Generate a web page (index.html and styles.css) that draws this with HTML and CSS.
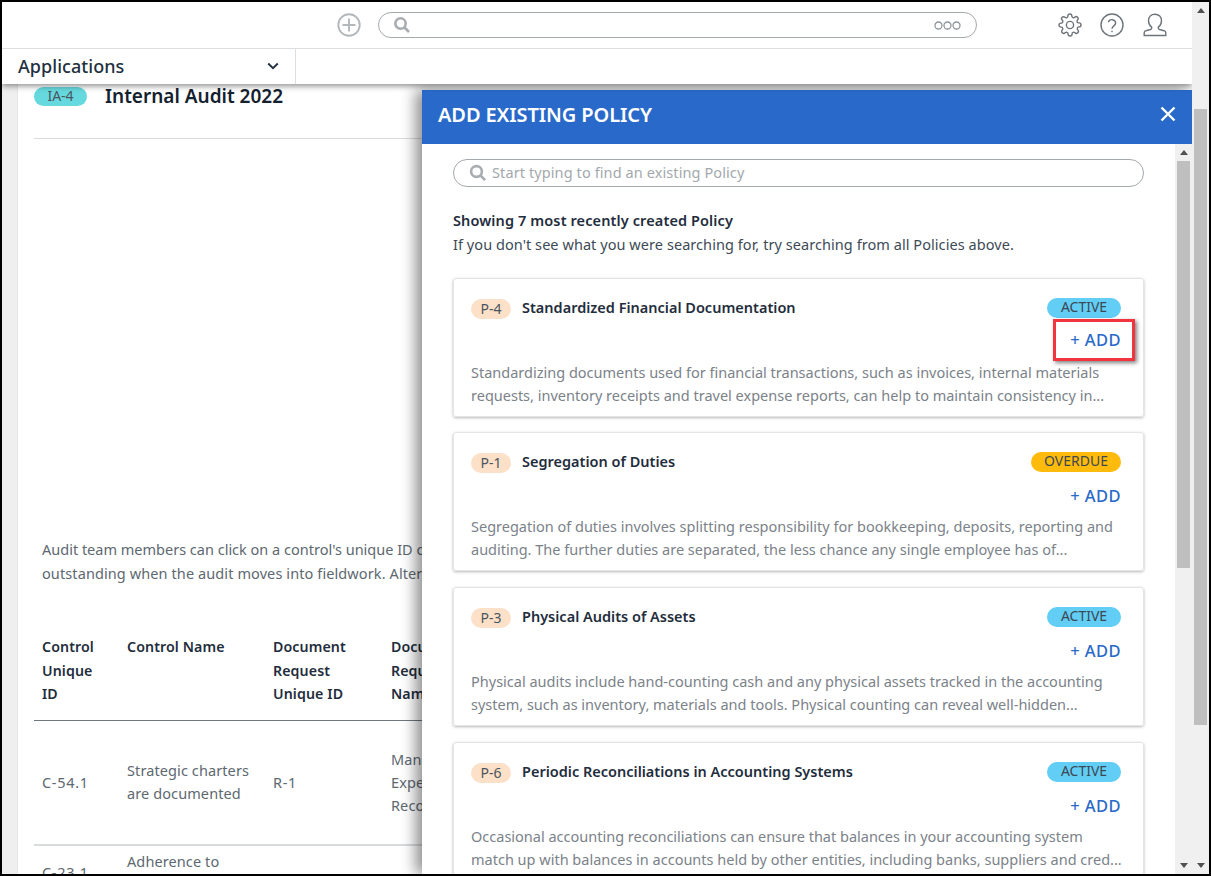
FILE: index.html
```html
<!DOCTYPE html>
<html lang="en">
<head>
<meta charset="utf-8">
<title>Add Existing Policy</title>
<link rel="stylesheet" href="styles.css">
</head>
<body>
<div class="frame">
  <div class="app">
    <header class="topbar">
      <div class="toprow">
        <svg class="ico-plus" viewBox="0 0 24 24"><circle cx="12" cy="12" r="10.7"/><path d="M12 5.5v13M5.5 12h13"/></svg>
        <div class="globalsearch">
          <svg class="ico-search" viewBox="0 0 18 18"><circle cx="7.5" cy="7.5" r="5.2"/><path d="M11.5 11.5l4.5 4.5"/></svg>
          <svg class="ico-dots" viewBox="0 0 27 9"><circle cx="4.5" cy="4.5" r="3.5"/><circle cx="13.5" cy="4.5" r="3.5"/><circle cx="22.5" cy="4.5" r="3.5"/></svg>
        </div>
        <div class="topicons">
          <svg class="ico-top" viewBox="0 0 24 24"><circle cx="12" cy="12" r="3.6"/><path d="M19.4 15a1.65 1.65 0 0 0 .33 1.82l.06.06a2 2 0 0 1-2.83 2.83l-.06-.06a1.65 1.65 0 0 0-2.82 1.17V21a2 2 0 0 1-4 0v-.09A1.65 1.65 0 0 0 7.18 19.8l-.06.06a2 2 0 0 1-2.83-2.83l.06-.06a1.65 1.65 0 0 0-1.17-2.82H3a2 2 0 0 1 0-4h.09A1.65 1.65 0 0 0 4.2 7.18l-.06-.06a2 2 0 0 1 2.83-2.83l.06.06a1.65 1.65 0 0 0 2.82-1.17V3a2 2 0 0 1 4 0v.09a1.65 1.65 0 0 0 2.82 1.17l.06-.06a2 2 0 0 1 2.83 2.83l-.06.06a1.65 1.65 0 0 0 1.17 2.82H21a2 2 0 0 1 0 4h-.09a1.65 1.65 0 0 0-1.51 1z"/></svg>
          <svg class="ico-top" viewBox="0 0 24 24"><circle cx="12" cy="12" r="11"/><path d="M8.3 9.3a3.8 3.8 0 0 1 7.4.8c0 2.6-3.7 3-3.7 5.6"/><path d="M12 17.8v1.4"/></svg>
          <svg class="ico-top" viewBox="0 0 24 24"><path d="M12 1.2c-3.9 0-6.5 2.8-6.5 6.5 0 3 1.5 5.2 3.3 6.6 0 1.2-.3 1.9-1.3 2.2l-4.6 1.2c-1 .3-1.7 1.1-1.7 2.1v2.7h21.6v-2.7c0-1-.7-1.8-1.7-2.1l-4.6-1.2c-1-.3-1.3-1-1.3-2.2 1.8-1.4 3.3-3.6 3.3-6.6 0-3.7-2.6-6.5-6.5-6.5z"/></svg>
        </div>
      </div>
      <div class="subrow">
        <div class="appmenu">
          <span class="appmenu-label">Applications</span>
          <svg class="ico-chev" viewBox="0 0 12 8"><path d="M1.2 1.5L6 6.2l4.8-4.7"/></svg>
        </div>
      </div>
    </header>

    <main class="stage">
      <div class="gutter"></div>
      <section class="sheet">
        <div class="sheet-head">
          <span class="pill pill-teal">IA-4</span>
          <h1 class="sheet-title">Internal Audit 2022</h1>
        </div>
        <p class="intro">Audit team members can click on a control's unique ID or<br><span class="intro-wide">outstanding when the audit moves into fieldwork. Alternatively</span></p>
        <table class="grid">
          <thead>
            <tr><th class="c1">Control<br>Unique<br>ID</th><th class="c2">Control Name</th><th class="c3">Document<br>Request<br>Unique ID</th><th class="c4">Document<br>Request<br>Name</th></tr>
          </thead>
          <tbody>
            <tr class="row-a"><td class="code">C-54.1</td><td>Strategic charters<br>are documented</td><td class="code">R-1</td><td>Management<br>Expense<br>Records</td></tr>
            <tr class="row-b"><td class="code low">C-23.1</td><td>Adherence to</td><td></td><td></td></tr>
          </tbody>
        </table>
      </section>

      <aside class="drawer">
        <div class="drawer-head">
          <h2 class="drawer-title">ADD EXISTING POLICY</h2>
          <svg class="ico-close" viewBox="0 0 16 16"><path d="M1.5 1.5l13 13M14.5 1.5l-13 13"/></svg>
        </div>
        <div class="drawer-main">
          <div class="drawer-body">
            <div class="policysearch">
              <svg class="ico-search2" viewBox="0 0 18 18"><circle cx="7.5" cy="7.5" r="5.4"/><path d="M11.5 11.5l4.6 4.6"/></svg>
              <span class="placeholder">Start typing to find an existing Policy</span>
            </div>
            <p class="hint"><strong>Showing 7 most recently created Policy</strong><br>If you don't see what you were searching for, try searching from all Policies above.</p>

            <article class="card">
              <div class="card-top"><span class="pill pill-peach">P-4</span><span class="card-title">Standardized Financial Documentation</span><span class="status status-active">ACTIVE</span></div>
              <div class="card-add"><a class="add add-marked">+ ADD</a></div>
              <p class="card-desc">Standardizing documents used for financial transactions, such as invoices, internal materials<br>requests, inventory receipts and travel expense reports, can help to maintain consistency in...</p>
            </article>
            <article class="card">
              <div class="card-top"><span class="pill pill-peach">P-1</span><span class="card-title">Segregation of Duties</span><span class="status status-overdue">OVERDUE</span></div>
              <div class="card-add"><a class="add">+ ADD</a></div>
              <p class="card-desc">Segregation of duties involves splitting responsibility for bookkeeping, deposits, reporting and<br>auditing. The further duties are separated, the less chance any single employee has of...</p>
            </article>
            <article class="card">
              <div class="card-top"><span class="pill pill-peach">P-3</span><span class="card-title">Physical Audits of Assets</span><span class="status status-active">ACTIVE</span></div>
              <div class="card-add"><a class="add">+ ADD</a></div>
              <p class="card-desc">Physical audits include hand-counting cash and any physical assets tracked in the accounting<br>system, such as inventory, materials and tools. Physical counting can reveal well-hidden...</p>
            </article>
            <article class="card">
              <div class="card-top"><span class="pill pill-peach">P-6</span><span class="card-title">Periodic Reconciliations in Accounting Systems</span><span class="status status-active">ACTIVE</span></div>
              <div class="card-add"><a class="add">+ ADD</a></div>
              <p class="card-desc">Occasional accounting reconciliations can ensure that balances in your accounting system<br>match up with balances in accounts held by other entities, including banks, suppliers and cred...</p>
            </article>
          </div>
          <div class="scrollbar scrollbar-inner">
            <span class="arrow arrow-up"></span>
            <span class="thumb thumb-inner"></span>
            <span class="arrow arrow-down"></span>
          </div>
        </div>
      </aside>
    </main>
  </div>
  <div class="scrollbar scrollbar-outer">
    <span class="arrow arrow-up"></span>
    <span class="thumb thumb-outer"></span>
    <span class="arrow arrow-down"></span>
  </div>
</div>
</body>
</html>
```
FILE: styles.css
```css
* { box-sizing: border-box; }
html, body { margin: 0; height: 100%; overflow: hidden; }
body { font-family: "Noto Sans", "Open Sans", sans-serif; color: #1f2d3d; background: #000; }

.frame { display: flex; height: 876px; width: 1211px; border: 2px solid #000; background: #fff; overflow: hidden; }
.app { width: 1190px; height: 872px; display: flex; flex-direction: column; position: relative; overflow: hidden; }

/* top bar */
.topbar { flex: none; height: 82px; background: #fff; box-shadow: 0 2px 6px rgba(0,0,0,.45); position: relative; z-index: 3; }
.toprow { height: 47px; display: flex; align-items: center; padding-left: 335px; border-bottom: 1px solid #dcdfe1; }
.ico-plus { width: 24px; height: 24px; fill: none; stroke: #b3b8bc; stroke-width: 1.9; margin-top: -1px; }
.globalsearch { width: 599px; height: 26px; margin-left: 17px; margin-top: -1px; border: 1px solid #a4a9ad; border-radius: 13px; display: flex; align-items: center; justify-content: space-between; padding: 0 15px 0 14px; }
.ico-search { width: 18px; height: 18px; fill: none; stroke: #a8adb1; stroke-width: 2.6; }
.ico-dots { width: 27px; height: 9px; fill: none; stroke: #8f959a; stroke-width: 1.3; margin-top: 2px; }
.topicons { display: flex; gap: 18px; margin-left: 81px; }
.ico-top { width: 24px; height: 24px; fill: none; stroke: #6d747a; stroke-width: 1.4; }
.ico-top:last-child { margin-left: 1px; }
.subrow { height: 35px; display: flex; }
.appmenu { width: 294px; display: flex; align-items: center; justify-content: space-between; padding: 0 16px; border-right: 1px solid #dcdfe1; }
.appmenu-label { font-size: 18px; font-weight: 500; color: #22303f; padding-bottom: 2px; letter-spacing: .05px; }
.ico-chev { width: 12px; height: 8px; fill: none; stroke: #22303f; stroke-width: 1.9; margin-top: -2px; }

/* background page */
.stage { flex: 1; display: flex; position: relative; min-height: 0; background: #fff; }
.gutter { flex: none; width: 15px; background: #efefef; }
.sheet { flex: none; width: 405px; background: #fff; border-left: 1px solid #e6e6e6; padding: 3px 0 0 16px; overflow: hidden; }
.sheet-head { display: flex; align-items: flex-start; gap: 18px; height: 52px; border-bottom: 1px solid #d8dbdd; }
.sheet-title { margin: 0; font-size: 19px; line-height: 19px; font-weight: 600; color: #14212e; }
.pill { display: inline-flex; align-items: center; justify-content: center; border-radius: 10px; font-size: 14px; color: #4a5560; flex: none; padding-bottom: 2px; }
.pill-teal { width: 53px; height: 19px; background: #66d9de; }
.pill-peach { width: 40px; height: 20px; background: #fde0c8; }
.intro { margin: 399px 0 0 8px; font-size: 14.5px; line-height: 23.5px; color: #5d6870; white-space: nowrap; }
.intro-wide { letter-spacing: .1px; }

.grid { border-collapse: collapse; table-layout: fixed; width: 549px; margin-top: 50px; font-size: 14.5px; letter-spacing: .1px; }
.grid th { text-align: left; vertical-align: top; font-size: 14.2px; font-weight: 600; line-height: 23.5px; color: #1f2d3d; padding: 0 0 14px 8px; border-bottom: 1px solid #6e7880; }
.c1 { width: 85px; }
.c2 { width: 146px; }
.c3 { width: 118px; }
.c4 { width: 200px; }
.grid td { line-height: 23px; color: #5d6870; padding: 0 0 0 8px; vertical-align: middle; }
.grid td.code { letter-spacing: .7px; }
.row-a td { height: 125px; border-bottom: 2px solid #d8dbdd; }
.row-b td { height: 40px; vertical-align: top; padding-top: 4px; }
.row-b td.low { padding-top: 15px; }

/* drawer */
.drawer { position: absolute; left: 420px; right: 0; top: 6px; bottom: 0; display: flex; flex-direction: column; background: #fff; box-shadow: -6px 0 14px rgba(0,0,0,.45); }
.drawer-head { flex: none; height: 54px; background: #2969c9; display: flex; align-items: center; justify-content: space-between; padding: 0 16px 6px 16px; }
.drawer-title { margin: 0; font-size: 20px; font-weight: 600; letter-spacing: -.1px; color: #fff; }
.ico-close { width: 16px; height: 16px; fill: none; stroke: #fff; stroke-width: 2.4; }
.drawer-main { flex: 1; min-height: 0; display: flex; }
.drawer-body { flex: 1; min-width: 0; padding: 15px 31px 0; overflow: hidden; }
.policysearch { height: 28px; border: 1px solid #a4a9ad; border-radius: 14px; display: flex; align-items: center; gap: 6px; padding-left: 15px; }
.ico-search2 { width: 18px; height: 18px; fill: none; stroke: #a8adb1; stroke-width: 2.6; }
.placeholder { font-size: 14.5px; color: #a3a8ac; letter-spacing: .1px; padding-bottom: 2px; margin-left: -1px; }
.hint { margin: 21px 0 22px; font-size: 14.5px; line-height: 24px; color: #3d4a56; letter-spacing: .06px; }
.hint strong { font-weight: 600; color: #1f2d3d; letter-spacing: .11px; }

.card { height: 139px; margin-bottom: 16px; padding: 20px 22px 0 17px; border: 1px solid #e2e4e6; border-radius: 3px; box-shadow: 0 1px 3px rgba(0,0,0,.28); }
.card:first-of-type { margin-bottom: 15px; }
.card-top { height: 20px; display: flex; align-items: center; }
.card-title { margin-left: 11px; font-size: 14.5px; font-weight: 600; color: #1f2d3d; padding-bottom: 4px; }
.status { margin-left: auto; height: 20px; margin-top: -2px; padding-bottom: 3px; border-radius: 10px; display: flex; align-items: center; justify-content: center; font-size: 14px; color: #3c4852; }
.status-active { width: 74px; background: #62cdf5; }
.status-overdue { width: 90px; background: #ffbb0c; }
.card-add { height: 24px; margin-top: 10px; display: flex; justify-content: flex-end; align-items: center; }
.add { font-size: 16.5px; font-weight: 500; letter-spacing: .4px; color: #2969c9; }
.add-marked { height: 42px; margin: -2px -14px 0 0; padding: 0 11px 2px 14px; display: flex; align-items: center; border: 3px solid #f2343f; box-shadow: 2px 2px 4px rgba(0,0,0,.5); background: #fff; flex: none; }
.card-desc { margin: 8px 0 0; font-size: 14.5px; line-height: 23px; color: #7b8289; white-space: nowrap; }

/* scrollbars */
.scrollbar { flex: none; width: 17px; background: #f0f0f0; display: flex; flex-direction: column; align-items: center; }
.scrollbar-outer { height: 872px; }
.arrow { flex: none; width: 0; height: 0; border-left: 4px solid transparent; border-right: 4px solid transparent; }
.arrow-up { border-bottom: 5px solid #505050; margin-top: 6px; }
.arrow-down { border-top: 5px solid #505050; margin-top: auto; margin-bottom: 6px; }
.thumb { flex: none; width: 13px; background: #bfbfbf; }
.thumb-inner { height: 407px; margin-top: 6px; }
.thumb-outer { height: 616px; margin-top: 96px; }
```
